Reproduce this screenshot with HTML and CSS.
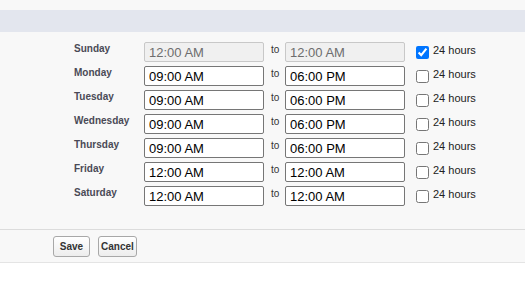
FILE: index.html
```html
<!DOCTYPE html>
<html lang="en">
<head>
    <meta charset="UTF-8">
    <title>Business Hours</title>
    <link rel="stylesheet" href="styles.css">
</head>
<body>
    <div class="panel">
        <div class="band"></div>
        <div class="hours">
            <span class="day">Sunday</span>
            <input type="text" class="time" value="12:00 AM" disabled>
            <span class="to">to</span>
            <input type="text" class="time" value="12:00 AM" disabled>
            <label class="allday"><input type="checkbox" checked> 24 hours</label>

            <span class="day">Monday</span>
            <input type="text" class="time" value="09:00 AM">
            <span class="to">to</span>
            <input type="text" class="time" value="06:00 PM">
            <label class="allday"><input type="checkbox"> 24 hours</label>

            <span class="day">Tuesday</span>
            <input type="text" class="time" value="09:00 AM">
            <span class="to">to</span>
            <input type="text" class="time" value="06:00 PM">
            <label class="allday"><input type="checkbox"> 24 hours</label>

            <span class="day">Wednesday</span>
            <input type="text" class="time" value="09:00 AM">
            <span class="to">to</span>
            <input type="text" class="time" value="06:00 PM">
            <label class="allday"><input type="checkbox"> 24 hours</label>

            <span class="day">Thursday</span>
            <input type="text" class="time" value="09:00 AM">
            <span class="to">to</span>
            <input type="text" class="time" value="06:00 PM">
            <label class="allday"><input type="checkbox"> 24 hours</label>

            <span class="day">Friday</span>
            <input type="text" class="time" value="12:00 AM">
            <span class="to">to</span>
            <input type="text" class="time" value="12:00 AM">
            <label class="allday"><input type="checkbox"> 24 hours</label>

            <span class="day">Saturday</span>
            <input type="text" class="time" value="12:00 AM">
            <span class="to">to</span>
            <input type="text" class="time" value="12:00 AM">
            <label class="allday"><input type="checkbox"> 24 hours</label>
        </div>
        <div class="buttons">
            <button type="button" class="btn">Save</button>
            <button type="button" class="btn">Cancel</button>
        </div>
    </div>
</body>
</html>
```

FILE: styles.css
```css
body {
    margin: 0;
    background-color: white;
    font-family: "Liberation Sans", Arial, sans-serif;
}
.panel {
    background-color: #f8f8f8;
    padding-top: 10px;
}
.band {
    height: 22px;
    background-color: #e3e6ee;
}
.hours {
    display: grid;
    grid-template-columns: 70px 120px 21px 120px auto;
    grid-auto-rows: 20px;
    row-gap: 4px;
    padding: 10px 0 23px 74px;
}
.day {
    font-size: 10px;
    font-weight: bold;
    line-height: 12px;
    color: #4a4a56;
    padding-top: 1px;
}
.time {
    box-sizing: border-box;
    width: 120px;
    height: 20px;
    margin: 0;
    padding: 0 4px;
    border: 1px solid #767676;
    border-radius: 2px;
    background-color: white;
    font-family: "Liberation Sans", Arial, sans-serif;
    font-size: 13px;
    color: #000;
}
.time:disabled {
    background-color: #f0f0f0;
    border-color: #c8c8c8;
    color: #6d6d6d;
}
.to {
    font-size: 10px;
    line-height: 12px;
    color: #333;
    padding: 2px 0 0 7px;
}
.allday {
    display: flex;
    align-items: flex-start;
    gap: 4px;
    padding: 2px 0 0 11px;
    font-size: 11px;
    line-height: 12px;
    color: #222;
}
.allday input {
    width: 13px;
    height: 13px;
    margin: 2px 0 0;
}
.buttons {
    display: flex;
    gap: 8px;
    padding: 6px 0 5px 53px;
    border-top: 1px solid #dcdcdc;
    border-bottom: 1px solid #e4e4e4;
}
.btn {
    box-sizing: border-box;
    min-width: 37px;
    height: 21px;
    margin: 0;
    padding: 0 2px;
    border: 1px solid #a8a8a8;
    border-radius: 3px;
    background: linear-gradient(#ffffff, #ededed);
    font-family: "Liberation Sans", Arial, sans-serif;
    font-size: 10px;
    font-weight: bold;
    color: #333;
}
```
